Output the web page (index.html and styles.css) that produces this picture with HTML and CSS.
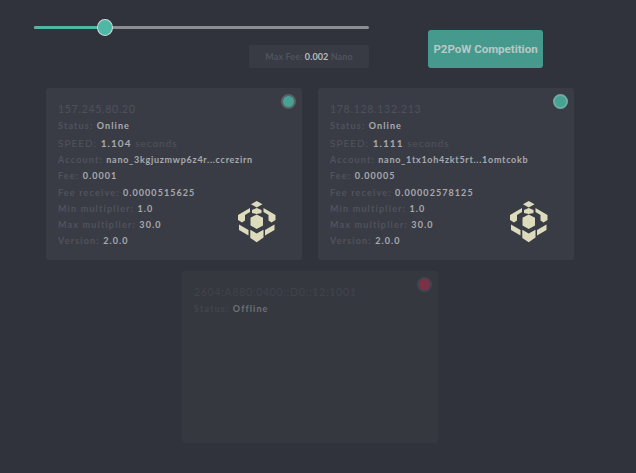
FILE: index.html
```html
<!DOCTYPE html>
<html lang="en">
<head>
<meta charset="utf-8">
<title>P2PoW Workers</title>
<link rel="stylesheet" href="styles.css">
</head>
<body>
<svg class="defs" width="0" height="0" aria-hidden="true">
  <symbol id="cube" viewBox="0 0 38 42">
    <g fill="#dcdcbc">
      <polygon points="18.7,0 24.5,3.2 18.7,6.5 13,3.2"/>
      <polygon points="18.7,7 23.5,9 23.5,12 18.7,13 14,12 14,9"/>
      <polygon points="12,7 0,14 0,19 4,21.5 7,19.5 7,14 12,11"/>
      <polygon points="25.5,7 37.5,14 37.5,19 33.5,21.5 30.5,19.5 30.5,14 25.5,11"/>
      <polygon points="18.7,13.5 25,16.7 25,24.5 18.7,28 12.5,24.5 12.5,16.7"/>
      <polygon points="1,23.5 10.5,29 10.5,34.5 1,29"/>
      <polygon points="36.5,23.5 36.5,29 27,34.5 27,29"/>
      <polygon points="12.3,28.7 18.7,32.5 25.5,28.7 25.5,36.5 18.7,41.3 12.3,37"/>
    </g>
  </symbol>
</svg>
<header class="top">
  <div class="fee-col">
    <div class="slider"><div class="fill"></div><div class="knob"></div></div>
    <div class="fee-box"><span class="k">Max Fee: </span><span class="v">0.002</span><span class="k"> Nano</span></div>
  </div>
  <button class="cta" type="button">P2PoW Competition</button>
</header>
<main class="cards">
  <article class="card">
    <span class="dot on"></span>
    <h2 class="ip">157.245.80.20</h2>
    <p class="row"><span class="k">Status: </span><span class="v">Online</span></p>
    <p class="row speed"><span class="k">SPEED: </span><span class="v">1.104</span><span class="k"> seconds</span></p>
    <p class="row acct"><span class="k">Account: </span><span class="v">nano_3kgjuzmwp6z4r...ccrezirn</span></p>
    <p class="row"><span class="k">Fee: </span><span class="v">0.0001</span></p>
    <p class="row"><span class="k">Fee receive: </span><span class="v">0.0000515625</span></p>
    <p class="row"><span class="k">Min multiplier: </span><span class="v">1.0</span></p>
    <p class="row"><span class="k">Max multiplier: </span><span class="v">30.0</span></p>
    <p class="row"><span class="k">Version: </span><span class="v">2.0.0</span></p>
    <svg class="logo"><use href="#cube"/></svg>
  </article>
  <article class="card">
    <span class="dot on"></span>
    <h2 class="ip">178.128.132.213</h2>
    <p class="row"><span class="k">Status: </span><span class="v">Online</span></p>
    <p class="row speed"><span class="k">SPEED: </span><span class="v">1.111</span><span class="k"> seconds</span></p>
    <p class="row acct"><span class="k">Account: </span><span class="v">nano_1tx1oh4zkt5rt...1omtcokb</span></p>
    <p class="row"><span class="k">Fee: </span><span class="v">0.00005</span></p>
    <p class="row"><span class="k">Fee receive: </span><span class="v">0.00002578125</span></p>
    <p class="row"><span class="k">Min multiplier: </span><span class="v">1.0</span></p>
    <p class="row"><span class="k">Max multiplier: </span><span class="v">30.0</span></p>
    <p class="row"><span class="k">Version: </span><span class="v">2.0.0</span></p>
    <svg class="logo"><use href="#cube"/></svg>
  </article>
  <article class="card offline">
    <span class="dot off"></span>
    <h2 class="ip">2604:A880:0400::D0::12:1001</h2>
    <p class="row"><span class="k">Status: </span><span class="v">Offline</span></p>
  </article>
</main>
</body>
</html>
```
FILE: styles.css
```css
* { box-sizing: border-box; }
html, body { margin: 0; padding: 0; }
body {
  width: 636px;
  height: 473px;
  overflow: hidden;
  background: #30333b;
  font-family: "Lato", sans-serif;
  font-size: 10px;
}
.defs { position: absolute; }
.top {
  display: flex;
  align-items: flex-start;
  padding: 20px 0 0 34px;
  height: 88px;
}
.fee-col { width: 335px; }
.slider {
  position: relative;
  height: 3px;
  margin-top: 6px;
  background: #8c8d90;
  border-radius: 2px;
}
.fill {
  width: 71px;
  height: 3px;
  background: #4db8a6;
  border-radius: 2px;
}
.knob {
  position: absolute;
  left: 63px;
  top: -7px;
  width: 16px;
  height: 17px;
  border-radius: 50%;
  background: #4db8a6;
  border: 1px solid #d5d8d8;
}
.fee-box {
  width: 120px;
  height: 23px;
  margin: 16px 0 0 215px;
  background: #383b44;
  border-radius: 2px;
  text-align: center;
  font-size: 9px;
  font-weight: 700;
  letter-spacing: 0.1px;
  line-height: 23px;
}
.fee-box .k { color: #4f535e; }
.fee-box .v { color: #b9bbbc; }
.cta {
  width: 115px;
  height: 38px;
  margin: 10px 0 0 59px;
  padding: 0;
  border: 0;
  border-radius: 3px;
  background: #469a8d;
  color: #b9c8c5;
  font-family: "Roboto", sans-serif;
  font-size: 11.5px;
  font-weight: 700;
}
.cards {
  display: flex;
  flex-wrap: wrap;
  justify-content: center;
  gap: 11px 16px;
  width: 620px;
}
.card {
  position: relative;
  width: 256px;
  height: 172px;
  padding: 14px 12px 0;
  background: #3a3c45;
  border-radius: 3px;
}
.card.offline { background: #363840; }
.ip {
  margin: 0 0 2px;
  font-size: 10.5px;
  font-weight: 400;
  line-height: 14px;
  letter-spacing: 0.72px;
  color: #4e515b;
}
.offline .ip { color: #41434c; }
.row {
  margin: 0;
  height: 16.2px;
  line-height: 16px;
  font-size: 9px;
  letter-spacing: 1px;
  white-space: nowrap;
}
.row .k { color: #50535d; font-weight: 700; letter-spacing: 1.17px; }
.row .v { color: #a8aaad; font-weight: 700; letter-spacing: 1.07px; }
.row.acct .v { letter-spacing: 0.72px; }
.offline .row .k { color: #43454e; }
.offline .row .v { color: #6f7175; }
.speed { font-size: 10px; height: 18px; line-height: 18px; }
.row.speed .k { font-weight: 400; letter-spacing: 1px; }
.dot {
  position: absolute;
  top: 6px;
  right: 6px;
  width: 15px;
  height: 15px;
  border-radius: 50%;
  border: 2px solid #5d7a78;
}
.dot.on { background: #46a292; border-color: #70aba3; }
.card:first-child .dot.on { border-color: #5a6166; }
.dot.off { background: #7c3146; border-color: #43454e; }
.logo {
  position: absolute;
  left: 192px;
  top: 113px;
  width: 38px;
  height: 42px;
}
```
